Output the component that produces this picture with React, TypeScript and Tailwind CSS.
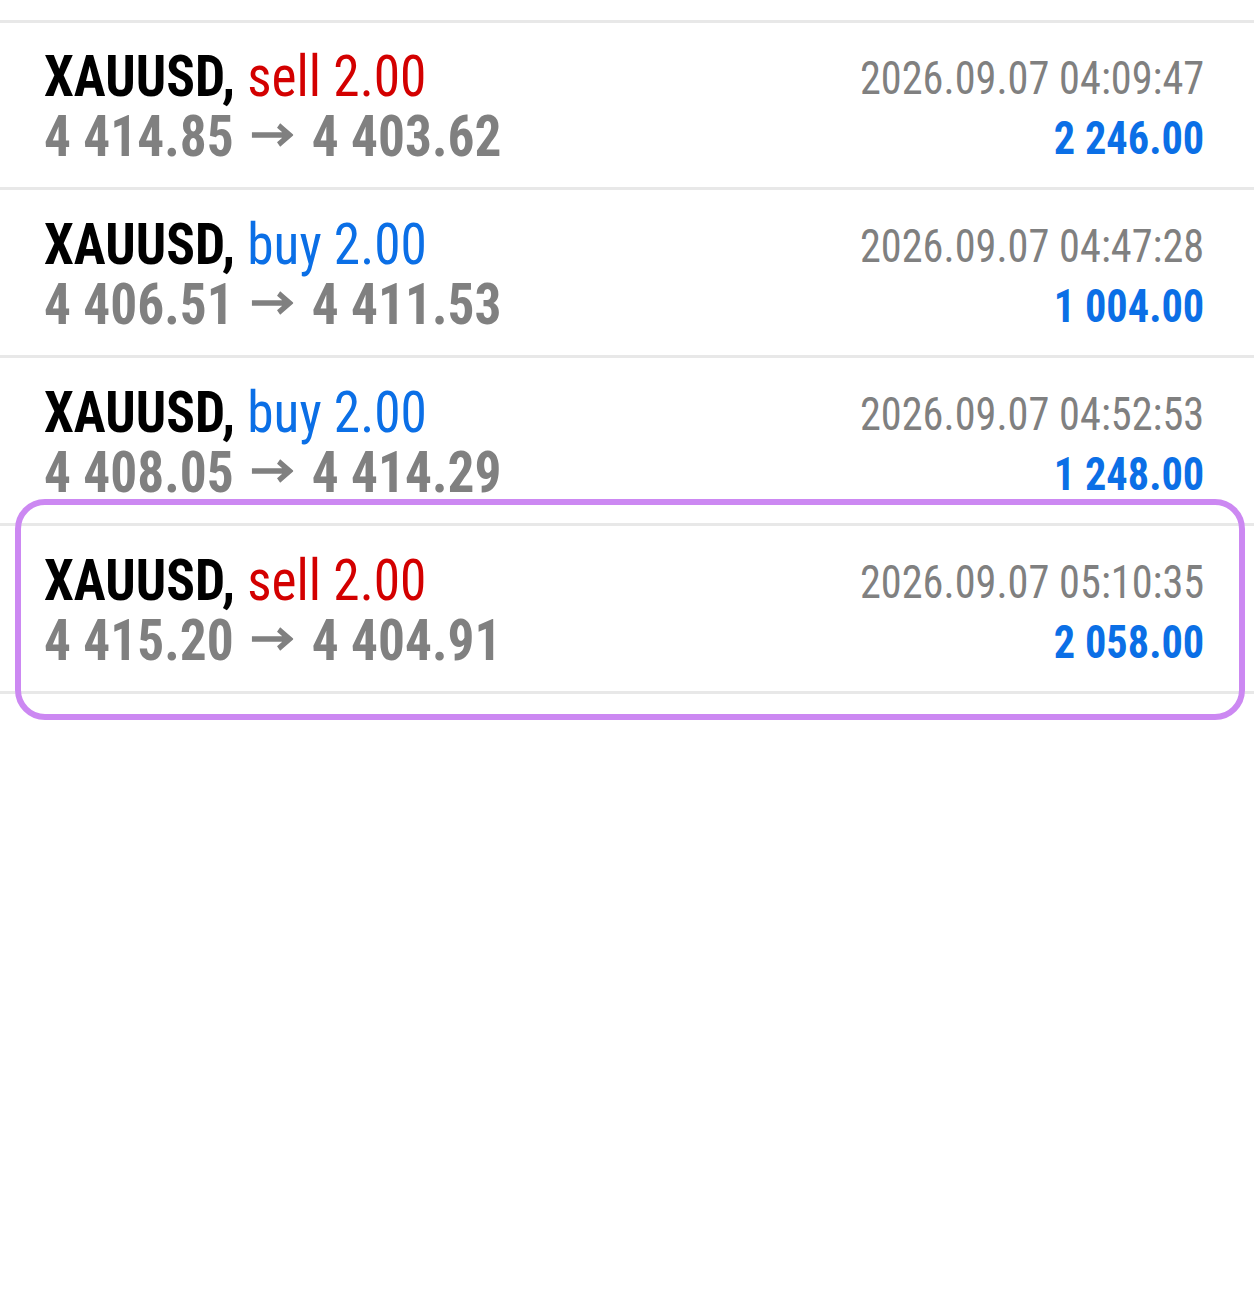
const deals = [
  { side: 'sell', open: '4 414.85', close: '4 403.62', time: '2026.09.07 04:09:47', profit: '2 246.00' },
  { side: 'buy', open: '4 406.51', close: '4 411.53', time: '2026.09.07 04:47:28', profit: '1 004.00' },
  { side: 'buy', open: '4 408.05', close: '4 414.29', time: '2026.09.07 04:52:53', profit: '1 248.00' },
  { side: 'sell', open: '4 415.20', close: '4 404.91', time: '2026.09.07 05:10:35', profit: '2 058.00' },
];

function Arrow() {
  return (
    <svg width="46" height="24" viewBox="0 0 46 24" className="ml-[19px] mr-[20px] inline-block align-[9px]">
      <path d="M1 12H42M30 2.5L42 12L30 21.5" fill="none" stroke="#808080" strokeWidth="5.5" />
    </svg>
  );
}

export default function App() {
  return (
    <div className="relative min-h-[1306px] w-[1254px] bg-white pt-[20px] font-['Roboto',sans-serif] [font-stretch:condensed]">
      <div className="border-t-[3px] border-[#e8e8e8]">
        {deals.map((d, i) => (
          <div
            key={i}
            className={`flex items-start justify-between border-b-[3px] border-[#e8e8e8] pl-[44px] pr-[50px] ${
              i === 0 ? 'h-[167px] pt-[23px]' : 'h-[168px] pt-[24px]'
            }`}
          >
            <div className="origin-left scale-x-92 text-[58px] leading-[60px]">
              <div className="whitespace-nowrap">
                <span className="font-bold text-black">XAUUSD,</span>{' '}
                <span className={d.side === 'sell' ? 'text-[#d30000]' : 'text-[#0b6fe6]'}>
                  {d.side} 2.00
                </span>
              </div>
              <div className="whitespace-nowrap font-bold text-[#808080]">
                {d.open}
                <Arrow />
                {d.close}
              </div>
            </div>
            <div className="mt-[2px] origin-right scale-x-92 text-right text-[46px] leading-[60px]">
              <div className="whitespace-nowrap text-[#808080]">{d.time}</div>
              <div className="whitespace-nowrap font-bold text-[#0b6fe6]">{d.profit}</div>
            </div>
          </div>
        ))}
      </div>
      <div className="pointer-events-none absolute left-[15px] top-[499px] h-[221px] w-[1230px] rounded-[30px] border-[6px] border-[#cc88f2]" />
    </div>
  );
}
